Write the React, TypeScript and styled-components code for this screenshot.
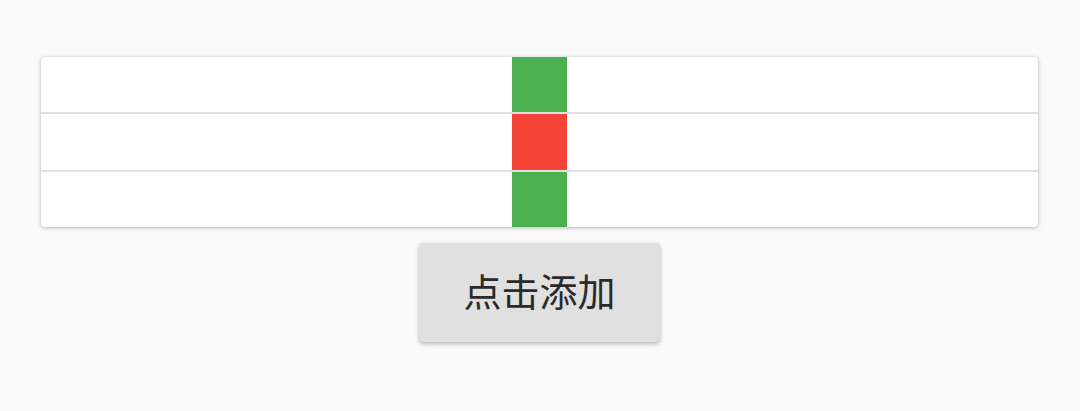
import React from "react";
import styled, { createGlobalStyle } from "styled-components";

const Global = createGlobalStyle`
  html, body { margin: 0; padding: 0; background: #fafafa; }
  body { font-family: "Noto Sans CJK SC", "Noto Sans", sans-serif; }
`;

const Page = styled.div`
  display: flex;
  flex-direction: column;
  align-items: center;
  gap: 16px;
  padding: 57px 42px 0 41px;
  height: 411px;
  box-sizing: border-box;
`;

const Card = styled.div`
  align-self: stretch;
  background: #ffffff;
  border-radius: 4px;
  box-shadow: 0 1px 4px rgba(0, 0, 0, 0.26), 0 0 1px rgba(0, 0, 0, 0.14);
  overflow: hidden;
  display: flex;
  flex-direction: column;
`;

const Row = styled.div<{ $h: number; $divider: boolean }>`
  display: grid;
  grid-template-columns: 1fr 55px 1fr;
  height: ${(p) => p.$h}px;
  border-bottom: ${(p) => (p.$divider ? "2px solid #e0e0e0" : "none")};
`;

const Cell = styled.div<{ $color: string }>`
  grid-column: 2;
  background: ${(p) => p.$color};
`;

const Button = styled.button`
  width: 241px;
  height: 99px;
  border: none;
  border-radius: 4px;
  background: #e0e0e0;
  box-shadow: 0 2px 4px rgba(0, 0, 0, 0.26), 0 0 1px rgba(0, 0, 0, 0.12);
  font-family: "Noto Sans CJK SC", "Noto Sans", sans-serif;
  font-size: 38px;
  color: #2a2a2a;
  padding: 0 0 6px 0;
  display: flex;
  align-items: center;
  justify-content: center;
`;

const rows = [
  { h: 55, color: "#4caf50", divider: true },
  { h: 56, color: "#f44336", divider: true },
  { h: 55, color: "#4caf50", divider: false },
];

export default function App() {
  return (
    <>
      <Global />
      <Page>
        <Card>
          {rows.map((r, i) => (
            <Row key={i} $h={r.h} $divider={r.divider}>
              <Cell $color={r.color} />
            </Row>
          ))}
        </Card>
        <Button>点击添加</Button>
      </Page>
    </>
  );
}
